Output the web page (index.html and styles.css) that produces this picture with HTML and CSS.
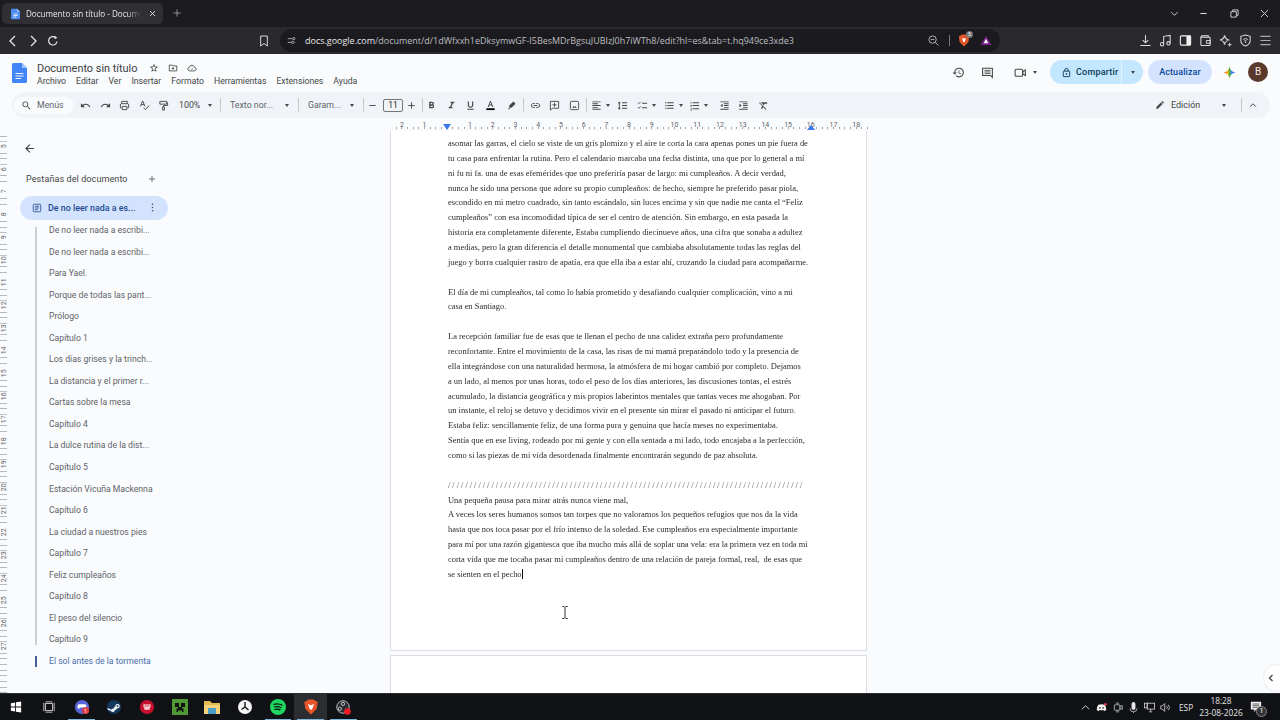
FILE: index.html
```html
<!DOCTYPE html>
<html lang="es">
<head>
  <meta charset="utf-8">
  <title>Documento sin título - Documentos de Google</title>
  <link rel="stylesheet" href="styles.css">
</head>
<body>
  <!-- browser tabs -->
  <div class="tabstrip">
    <div class="tab">
      <svg class="tab-icon" viewBox="0 0 12 14"><path d="M1 0h7l4 4v9a1 1 0 0 1-1 1H1a1 1 0 0 1-1-1V1a1 1 0 0 1 1-1z" fill="#4c8df6"/><path d="M8 0l4 4H8z" fill="#a6c8fb"/><path d="M3 7h6M3 9h6M3 11h4" stroke="#fff" stroke-width="1"/></svg>
      <span class="tab-title">Documento sin título - Documen</span>
      <svg class="tab-close" viewBox="0 0 10 10"><path d="M1.5 1.5l7 7M8.5 1.5l-7 7" stroke="#e6e6e6" stroke-width="1.3"/></svg>
    </div>
    <svg class="tab-new" viewBox="0 0 10 10"><path d="M5 .5v9M.5 5h9" stroke="#a9a9ad" stroke-width="1"/></svg>
    <div class="win-controls">
      <svg viewBox="0 0 10 10"><path d="M1.5 3.5L5 7l3.5-3.5" fill="none" stroke="#ddd" stroke-width="1"/></svg>
      <svg viewBox="0 0 10 10"><path d="M1.5 5h7" stroke="#ddd" stroke-width="1.2"/></svg>
      <svg viewBox="0 0 10 10"><path d="M1 3h6v6H1zM3 3V1h6v6H7" fill="none" stroke="#ddd" stroke-width="1"/></svg>
      <svg viewBox="0 0 10 10"><path d="M1 1l8 8M9 1l-8 8" stroke="#ddd" stroke-width="1"/></svg>
    </div>
  </div>

  <!-- address bar -->
  <div class="addressbar">
    <svg class="nav-btn" viewBox="0 0 12 12"><path d="M8 1L3 6l5 5" fill="none" stroke="#e8e8e8" stroke-width="1.3"/></svg>
    <svg class="nav-btn" viewBox="0 0 12 12"><path d="M4 1l5 5-5 5" fill="none" stroke="#e8e8e8" stroke-width="1.3"/></svg>
    <svg class="nav-btn" viewBox="0 0 12 12"><path d="M10 6.5A4.2 4.2 0 1 1 8.6 2.6" fill="none" stroke="#e8e8e8" stroke-width="1.2"/><path d="M7.3 0.6l3 2.1-2.6 1.6z" fill="#e8e8e8"/></svg>
    <svg class="bookmark" viewBox="0 0 12 14"><path d="M2 1h8v12L6 10l-4 3z" fill="none" stroke="#d8d8d8" stroke-width="1.2"/></svg>
    <div class="omnibox">
      <svg class="site-info" viewBox="0 0 12 12"><path d="M1 3.5h6M10 8.5h1M1 8.5h5" stroke="#cfcfcf" stroke-width="1"/><circle cx="9" cy="3.5" r="1.5" fill="none" stroke="#cfcfcf"/><circle cx="7.5" cy="8.5" r="1.5" fill="none" stroke="#cfcfcf"/></svg>
      <span class="url"><b>docs.google.com</b>/document/d/1dWfxxh1eDksymwGF-I5BesMDrBgsuJUBIzJ0h7iWTh8/edit?hl=es&amp;tab=t.hq949ce3xde3</span>
      <svg class="omni-zoom" viewBox="0 0 12 12"><circle cx="5" cy="5" r="4" fill="none" stroke="#bdbdbd"/><path d="M8 8l3.4 3.4M3 5h4" stroke="#bdbdbd"/></svg>
      <span class="omni-sep"></span>
      <span class="brave-badge">
        <svg viewBox="0 0 12 14"><path d="M2 1.500L4 .5h4l2 1 1.500 1-.7 6L6 13.500 1.200 8.500.5 2.500z" fill="#e2562b"/><path d="M4 4l2 1 2-1-1 4-1 1-1-1z" fill="#fff"/></svg>
        <i>5</i>
      </span>
      <svg class="omni-ext" viewBox="0 0 12 12"><path d="M6 1l6 10H0z" fill="#7a1d8c"/><path d="M6 4l2.600 5H3.400z" fill="#f4f4f4"/></svg>
    </div>
    <div class="browser-actions">
      <svg viewBox="0 0 14 14"><path d="M7 1v8M4 6.500L7 9.500l3-3M1.500 12.500h11" fill="none" stroke="#ddd" stroke-width="1.100"/></svg>
      <svg viewBox="0 0 14 14"><path d="M5 11V2.500l7-1V10" fill="none" stroke="#ddd" stroke-width="1.100"/><circle cx="3.300" cy="11" r="1.800" fill="none" stroke="#ddd" stroke-width="1.100"/><circle cx="10.200" cy="10" r="1.800" fill="none" stroke="#ddd" stroke-width="1.100"/></svg>
      <svg viewBox="0 0 14 14"><rect x="1.500" y="2" width="11" height="10" rx="1" fill="none" stroke="#eee" stroke-width="1.200"/><rect x="8" y="2" width="4.500" height="10" fill="#eee"/></svg>
      <svg viewBox="0 0 14 14"><path d="M2 3.500h9a1 1 0 0 1 1 1v7a1 1 0 0 1-1 1H3a1 1 0 0 1-1-1zM2 3.500l1-1.500h7v1.500" fill="none" stroke="#ddd" stroke-width="1.100"/><path d="M8 7h4v3H8z" fill="none" stroke="#ddd"/></svg>
      <svg viewBox="0 0 14 14"><path d="M6 1.500c.5 3 2 4.500 5 5-3 .5-4.500 2-5 5-.5-3-2-4.500-5-5 3-.5 4.500-2 5-5z" fill="none" stroke="#ddd" stroke-width="1.100"/><path d="M11.500 9.500v4M9.500 11.500h4" stroke="#ddd"/></svg>
      <svg viewBox="0 0 14 14"><path d="M7 1l5 1.500V7c0 3-2.500 5-5 6-2.500-1-5-3-5-6V2.500z" fill="none" stroke="#ddd" stroke-width="1.100"/><path d="M4.500 6a3.500 3.500 0 0 1 5 0M5.800 7.500a1.700 1.700 0 0 1 2.400 0" fill="none" stroke="#ddd"/><circle cx="7" cy="9" r=".8" fill="#ddd"/></svg>
      <svg viewBox="0 0 14 14"><path d="M1.500 2.500h11M1.500 7h11M1.500 11.500h11" stroke="#aaa" stroke-width="1.300"/></svg>
    </div>
  </div>

  <!-- docs title + menus -->
  <header class="docs-header">
    <svg class="docs-logo" viewBox="0 0 15 20"><path d="M1.500 0H10l5 5v13.500a1.500 1.500 0 0 1-1.500 1.500h-12A1.500 1.500 0 0 1 0 18.500v-17A1.500 1.500 0 0 1 1.500 0z" fill="#4285f4"/><path d="M10 0l5 5h-5z" fill="#a1c2fa"/><path d="M3.500 10.500h8M3.500 13h8M3.500 15.500h5.500" stroke="#f1f5fe" stroke-width="1.100"/></svg>
    <div class="docs-titles">
      <div class="title-row">
        <span class="doc-title">Documento sin título</span>
        <svg class="title-icon" viewBox="0 0 24 24"><path d="M22 9.240l-7.190-.62L12 2 9.190 8.630 2 9.240l5.460 4.730L5.820 21 12 17.270 18.180 21l-1.630-7.030L22 9.240zM12 15.400l-3.760 2.270 1-4.280-3.320-2.880 4.380-.38L12 6.100l1.710 4.040 4.380.38-3.320 2.880 1 4.280L12 15.400z"/></svg>
        <svg class="title-icon" viewBox="0 0 24 24"><path d="M3 5h7l2 2h9v12H3z" fill="none" stroke="#444746" stroke-width="2"/><path d="M12 10v6M9 13h6" stroke="#444746" stroke-width="2"/></svg>
        <svg class="title-icon" viewBox="0 0 24 24"><path d="M6.500 19a4.500 4.500 0 0 1-.6-8.960A6.500 6.500 0 0 1 18.300 10.100 4.500 4.500 0 0 1 17.500 19z" fill="none" stroke="#444746" stroke-width="2"/><path d="M9 13.500l2.200 2.200 4-4" fill="none" stroke="#444746" stroke-width="1.500"/></svg>
      </div>
      <nav class="menu-row">
        <span>Archivo</span><span>Editar</span><span>Ver</span><span>Insertar</span><span>Formato</span><span>Herramientas</span><span>Extensiones</span><span>Ayuda</span>
      </nav>
    </div>
    <div class="header-actions">
      <svg class="head-icon" viewBox="0 0 24 24"><path d="M13 3a9 9 0 0 0-9 9H1l3.890 3.890.07.14L9 12H6c0-3.870 3.130-7 7-7s7 3.130 7 7-3.130 7-7 7c-1.930 0-3.680-.79-4.940-2.060l-1.420 1.420A8.954 8.954 0 0 0 13 21a9 9 0 0 0 0-18zm-1 5v5l4.280 2.540.72-1.210-3.500-2.080V8H12z"/></svg>
      <svg class="head-icon comments" viewBox="0 0 24 24"><path d="M3 4h18v17l-3.500-3.500H3z" fill="none" stroke="#444746" stroke-width="2"/><path d="M6.500 8h11M6.500 11h11M6.500 14h11" stroke="#444746" stroke-width="1.600"/></svg>
      <svg class="head-icon meet" viewBox="0 0 24 24"><rect x="2" y="6" width="14" height="13" rx="2.500" fill="none" stroke="#444746" stroke-width="2"/><path d="M16 10.500l5-3v10l-5-3z" fill="none" stroke="#444746" stroke-width="2"/></svg>
      <span class="caret meet-caret"></span>
      <div class="share">
        <div class="share-main">
          <svg viewBox="0 0 24 24"><rect x="5" y="9" width="14" height="12" rx="1.500" fill="none" stroke="#0b3a55" stroke-width="2"/><path d="M8.500 9V6.500a3.500 3.500 0 0 1 7 0V9" fill="none" stroke="#0b3a55" stroke-width="2"/><circle cx="12" cy="15" r="1.700" fill="#0b3a55"/></svg>
          <span>Compartir</span>
        </div>
        <div class="share-more"><span class="caret"></span></div>
      </div>
      <div class="upgrade">Actualizar</div>
      <svg class="gemini" viewBox="0 0 24 24">
        <defs><linearGradient id="gem" x1="0" y1="0" x2="1" y2="0"><stop offset="0" stop-color="#ea4335"/><stop offset=".38" stop-color="#fbbc04"/><stop offset=".52" stop-color="#34a853"/><stop offset=".68" stop-color="#4285f4"/><stop offset="1" stop-color="#3b78e7"/></linearGradient></defs>
        <path d="M12 0c.6 6.800 4.400 11 12 12-7.600 1-11.400 5.200-12 12-.6-6.800-4.400-11-12-12 7.600-1 11.400-5.200 12-12z" fill="url(#gem)"/>
      </svg>
      <div class="avatar">B</div>
    </div>
  </header>

  <!-- formatting toolbar -->
  <div class="toolbar">
    <div class="tb-search">
      <svg viewBox="0 0 24 24"><path d="M15.500 14h-.79l-.28-.27C15.410 12.590 16 11.110 16 9.500 16 5.910 13.090 3 9.500 3S3 5.910 3 9.500 5.910 16 9.500 16c1.610 0 3.090-.59 4.230-1.570l.27.28v.79l5 4.990L20.490 19l-4.990-5zm-6 0C7.010 14 5 11.990 5 9.500S7.010 5 9.500 5 14 7.010 14 9.500 11.990 14 9.500 14z"/></svg>
      <span>Menús</span>
    </div>
    <span class="tb"><svg viewBox="0 0 24 24"><path d="M12.500 8c-2.650 0-5.050.99-6.900 2.600L2 7v9h9l-3.620-3.620c1.390-1.160 3.160-1.880 5.120-1.880 3.540 0 6.550 2.310 7.600 5.500l2.370-.78C21.080 11.030 17.150 8 12.500 8z"/></svg></span>
    <span class="tb"><svg viewBox="0 0 24 24"><path d="M18.400 10.600C16.550 8.990 14.150 8 11.500 8c-4.650 0-8.580 3.030-9.960 7.220L3.900 16c1.050-3.190 4.050-5.500 7.600-5.500 1.950 0 3.730.72 5.120 1.880L13 16h9V7l-3.600 3.600z"/></svg></span>
    <span class="tb"><svg viewBox="0 0 24 24"><path d="M6 8V3h12v5M6 17H3v-6.500A2.500 2.500 0 0 1 5.500 8h13a2.500 2.500 0 0 1 2.500 2.500V17h-3M7 14h10v7H7z" fill="none" stroke="#444746" stroke-width="2"/></svg></span>
    <span class="tb"><svg viewBox="0 0 24 24"><path d="M3 14L8 2l5 12M5 10h6M10 17l4 4 8-9" fill="none" stroke="#444746" stroke-width="2"/></svg></span>
    <span class="tb"><svg viewBox="0 0 24 24"><path d="M4 3h15v6H4zM19 6h2v6h-9v3M10 15h4v7h-4z" fill="none" stroke="#444746" stroke-width="2"/></svg></span>
    <span class="tb-label zoom-label">100%</span><span class="caret"></span>
    <span class="tb-sep sep-a"></span>
    <span class="tb-label style-label">Texto nor...</span><span class="caret caret-style"></span>
    <span class="tb-sep sep-b"></span>
    <span class="tb-label font-label">Garam...</span><span class="caret caret-font"></span>
    <span class="tb-sep sep-c"></span>
    <span class="tb size-btn"><svg viewBox="0 0 24 24"><path d="M5 12h14" stroke="#444746" stroke-width="2"/></svg></span>
    <span class="size-box">11</span>
    <span class="tb size-btn"><svg viewBox="0 0 24 24"><path d="M5 12h14M12 5v14" stroke="#444746" stroke-width="2"/></svg></span>
    <span class="tb-sep sep-d"></span>
    <span class="tb"><svg viewBox="0 0 24 24"><path d="M15.600 10.790c.97-.67 1.650-1.770 1.650-2.790 0-2.260-1.750-4-4-4H7v14h7.040c2.090 0 3.710-1.700 3.710-3.790 0-1.520-.86-2.820-2.150-3.420zM10 6.500h3c.83 0 1.500.67 1.500 1.500s-.67 1.500-1.500 1.500h-3v-3zm3.500 9H10v-3h3.500c.83 0 1.500.67 1.500 1.500s-.67 1.500-1.500 1.500z"/></svg></span>
    <span class="tb"><svg viewBox="0 0 24 24"><path d="M10 4v3h2.210l-3.420 8H6v3h8v-3h-2.210l3.420-8H18V4z"/></svg></span>
    <span class="tb"><svg viewBox="0 0 24 24"><path d="M12 17c3.310 0 6-2.690 6-6V3h-2.500v8c0 1.930-1.570 3.500-3.500 3.500S8.500 12.930 8.500 11V3H6v8c0 3.310 2.690 6 6 6zm-7 2v2h14v-2H5z"/></svg></span>
    <span class="tb"><svg viewBox="0 0 24 24"><path d="M11 2L6 15h2.300l1.100-3h5.200l1.100 3H18L13 2zm-.9 8L12 4.700 13.900 10z"/><path d="M3 18h18v4H3z" fill="#000"/></svg></span>
    <span class="tb highlight"><svg viewBox="0 0 24 24"><path d="M16 3l5 5-9 9H7v-5zM7 17l-3 3h5z"/></svg></span>
    <span class="tb-sep sep-e"></span>
    <span class="tb"><svg viewBox="0 0 24 24"><path d="M3.900 12c0-1.710 1.390-3.100 3.100-3.100h4V7H7c-2.760 0-5 2.240-5 5s2.240 5 5 5h4v-1.900H7c-1.710 0-3.100-1.390-3.100-3.100zM8 13h8v-2H8v2zm9-6h-4v1.900h4c1.710 0 3.100 1.390 3.100 3.100s-1.390 3.100-3.100 3.100h-4V17h4c2.760 0 5-2.240 5-5s-2.240-5-5-5z"/></svg></span>
    <span class="tb"><svg viewBox="0 0 24 24"><path d="M3 3h18v15H8l-5 4z" fill="none" stroke="#444746" stroke-width="2"/><path d="M12 6v9M7.500 10.500h9" stroke="#444746" stroke-width="2"/></svg></span>
    <span class="tb"><svg viewBox="0 0 24 24"><rect x="3" y="3" width="18" height="18" rx="2" fill="none" stroke="#444746" stroke-width="2"/><path d="M7 17l3-4 2 2.500 2-2.500 3 4z"/></svg></span>
    <span class="tb-sep sep-f"></span>
    <span class="tb tb-tight"><svg viewBox="0 0 24 24"><path d="M15 15H3v2h12v-2zm0-8H3v2h12V7zM3 13h18v-2H3v2zm0 8h18v-2H3v2zM3 3v2h18V3H3z"/></svg></span><span class="caret caret-near"></span>
    <span class="tb spacing"><svg viewBox="0 0 24 24"><path d="M5 3l3.500 4h-7zM5 21l3.500-4h-7zM4 7h2v10H4zM11 5h11v2H11zM11 11h11v2H11zM11 17h11v2H11z"/></svg></span>
    <span class="tb tb-tight checklist"><svg viewBox="0 0 24 24"><path d="M2 6l2 2 4-4M2 16l2 2 4-4" fill="none" stroke="#444746" stroke-width="2"/><path d="M11 6h11v2H11zM11 16h11v2H11z"/></svg></span><span class="caret caret-near"></span>
    <span class="tb tb-tight bullets"><svg viewBox="0 0 24 24"><path d="M4 10.500c-.83 0-1.500.67-1.500 1.500s.67 1.500 1.500 1.500 1.500-.67 1.500-1.500-.67-1.500-1.500-1.500zm0-6c-.83 0-1.500.67-1.500 1.500S3.170 7.500 4 7.500 5.500 6.830 5.500 6 4.830 4.500 4 4.500zm0 12c-.83 0-1.500.68-1.500 1.500s.68 1.500 1.500 1.500 1.500-.68 1.500-1.500-.67-1.500-1.500-1.500zM7 19h14v-2H7v2zm0-6h14v-2H7v2zm0-8v2h14V5H7z"/></svg></span><span class="caret caret-near"></span>
    <span class="tb tb-tight numbers"><svg viewBox="0 0 24 24"><path d="M3 4h2v5H4V5H3zM3 11h3v1H4.500L6 13.500V15H3v-1h2l-2-2zM3 18h3v5H3v-1h2v-1H4v-1h1v-1H3zM8 5h14v2H8zM8 11h14v2H8zM8 18h14v2H8z"/></svg></span><span class="caret caret-near"></span>
    <span class="tb indent"><svg viewBox="0 0 24 24"><path d="M3 3h18v2H3zM11 7h10v2H11zM11 11h10v2H11zM11 15h10v2H11zM3 19h18v2H3zM8 8v8l-5-4z"/></svg></span>
    <span class="tb"><svg viewBox="0 0 24 24"><path d="M3 3h18v2H3zM11 7h10v2H11zM11 11h10v2H11zM11 15h10v2H11zM3 19h18v2H3zM3 8v8l5-4z"/></svg></span>
    <span class="tb"><svg viewBox="0 0 24 24"><path d="M3.270 5L2 6.270l6.970 6.970L6.500 19h3l1.570-3.660L16.730 21 18 19.730 3.550 5.270 3.270 5zM6 5v.18L8.820 8h2.400l-.72 1.680 2.100 2.100L14.210 8H20V5H6z"/></svg></span>
    <div class="tb-right">
      <svg class="edit-icon" viewBox="0 0 24 24"><path d="M3 17.250V21h3.750L17.810 9.940l-3.750-3.750L3 17.250zM20.710 7.040a.996.996 0 0 0 0-1.410l-2.340-2.340a.996.996 0 0 0-1.410 0l-1.830 1.830 3.750 3.750 1.830-1.830z"/></svg>
      <span class="edit-label">Edición</span>
      <span class="caret edit-caret"></span>
      <span class="tb-sep edit-sep"></span>
      <svg class="collapse" viewBox="0 0 12 12"><path d="M2.500 8L6 4.500 9.500 8" fill="none" stroke="#444746" stroke-width="1.200"/></svg>
    </div>
  </div>

  <!-- horizontal ruler -->
  <div class="ruler-bar">
    <div class="ruler-h">
      <span>2</span><span>1</span><span class="ruler-mark"><i></i></span><span>1</span><span>2</span><span>3</span><span>4</span><span>5</span><span>6</span><span>7</span><span>8</span><span>9</span><span>10</span><span>11</span><span>12</span><span>13</span><span>14</span><span>15</span><span class="ruler-mark-r">16</span><span>17</span><span>18</span>
    </div>
  </div>

  <div class="workspace">
    <div class="ruler-v">
      <span>5</span><span>6</span><span>7</span><span>8</span><span>9</span><span>10</span><span>11</span><span>12</span><span>13</span><span>14</span><span>15</span><span>16</span><span>17</span><span>18</span><span>19</span><span>20</span><span>21</span><span>22</span><span>23</span><span>24</span><span>25</span><span>26</span><span>27</span>
    </div>

    <aside class="sidebar">
      <svg class="back" viewBox="0 0 24 24"><path d="M20 11H7.830l5.590-5.590L12 4l-8 8 8 8 1.410-1.410L7.830 13H20v-2z"/></svg>
      <div class="side-head">
        <span>Pestañas del documento</span>
        <svg viewBox="0 0 12 12"><path d="M6 1.500v9M1.500 6h9" stroke="#444746" stroke-width="1.100"/></svg>
      </div>
      <div class="side-active">
        <svg class="doc-tab-icon" viewBox="0 0 24 24"><rect x="3" y="3" width="18" height="18" rx="2.500" fill="none" stroke="#1f4a8f" stroke-width="2"/><path d="M7 8h10M7 12h10M7 16h7" stroke="#1f4a8f" stroke-width="2"/></svg>
        <span class="side-active-text">De no leer nada a es...</span>
        <svg class="kebab" viewBox="0 0 4 14"><circle cx="2" cy="2" r="1.200"/><circle cx="2" cy="7" r="1.200"/><circle cx="2" cy="12" r="1.200"/></svg>
      </div>
      <ul class="outline">
        <li>De no leer nada a escribi...</li>
        <li>De no leer nada a escribi...</li>
        <li>Para Yael.</li>
        <li>Porque de todas las pant...</li>
        <li>Prólogo</li>
        <li>Capítulo 1</li>
        <li>Los días grises y la trinch...</li>
        <li>La distancia y el primer r...</li>
        <li>Cartas sobre la mesa</li>
        <li>Capítulo 4</li>
        <li>La dulce rutina de la dist...</li>
        <li>Capítulo 5</li>
        <li>Estación Vicuña Mackenna</li>
        <li>Capítulo 6</li>
        <li>La ciudad a nuestros pies</li>
        <li>Capítulo 7</li>
        <li>Feliz cumpleaños</li>
        <li>Capítulo 8</li>
        <li>El peso del silencio</li>
        <li>Capítulo 9</li>
        <li class="current">El sol antes de la tormenta</li>
      </ul>
    </aside>

    <main class="doc-area">
      <div class="page">
        <div class="page-text">
          <p>asomar las garras, el cielo se viste de un gris plomizo y el aire te corta la cara apenas pones un pie fuera de</p>
          <p>tu casa para enfrentar la rutina. Pero el calendario marcaba una fecha distinta, una que por lo general a mí</p>
          <p>ni fu ni fa. una de esas efemérides que uno preferiría pasar de largo: mi cumpleaños. A decir verdad,</p>
          <p>nunca he sido una persona que adore su propio cumpleaños: de hecho, siempre he preferido pasar piola,</p>
          <p>escondido en mi metro cuadrado, sin tanto escándalo, sin luces encima y sin que nadie me canta el “Feliz</p>
          <p>cumpleaños” con esa incomodidad típica de ser el centro de atención. Sin embargo, en esta pasada la</p>
          <p>historia era completamente diferente, Estaba cumpliendo diecinueve años, una cifra que sonaba a adultez</p>
          <p>a medias, pero la gran diferencia el detalle monumental que cambiaba absolutamente todas las reglas del</p>
          <p>juego y borra cualquier rastro de apatía, era que ella iba a estar ahí, cruzando la ciudad para acompañarme.</p>
          <p class="blank"></p>
          <p>El día de mi cumpleaños, tal como lo había prometido y desafiando cualquier complicación, vino a mi</p>
          <p>casa en Santiago.</p>
          <p class="blank"></p>
          <p>La recepción familiar fue de esas que te llenan el pecho de una calidez extraña pero profundamente</p>
          <p>reconfortante. Entre el movimiento de la casa, las risas de mi mamá preparándolo todo y la presencia de</p>
          <p>ella integrándose con una naturalidad hermosa, la atmósfera de mi hogar cambió por completo. Dejamos</p>
          <p>a un lado, al menos por unas horas, todo el peso de los días anteriores, las discusiones tontas, el estrés</p>
          <p>acumulado, la distancia geográfica y mis propios laberintos mentales que tantas veces me ahogaban. Por</p>
          <p>un instante, el reloj se detuvo y decidimos vivir en el presente sin mirar el pasado ni anticipar el futuro.</p>
          <p>Estaba feliz: sencillamente feliz, de una forma pura y genuina que hacía meses no experimentaba.</p>
          <p>Sentía que en ese living, rodeado por mi gente y con ella sentada a mi lado, todo encajaba a la perfección,</p>
          <p>como si las piezas de mi vida desordenada finalmente encontrarán segundo de paz absoluta.</p>
          <p class="blank"></p>
          <p class="slashes">//////////////////////////////////////////////////////////////////////////////////</p>
          <p>Una pequeña pausa para mirar atrás nunca viene mal,</p>
          <p>A veces los seres humanos somos tan torpes que no valoramos los pequeños refugios que nos da la vida</p>
          <p>hasta que nos toca pasar por el frío intenso de la soledad. Ese cumpleaños era especialmente importante</p>
          <p>para mí por una razón gigantesca que iba mucho más allá de soplar una vela: era la primera vez en toda mi</p>
          <p>corta vida que me tocaba pasar mi cumpleaños dentro de una relación de pareja formal, real,&nbsp; de esas que</p>
          <p>se sienten en el pecho<span class="text-caret"></span></p>
        </div>
      </div>
      <div class="page page-next"></div>
    </main>

    <!-- mouse cursor and side panel handle, both float over the page -->
    <svg class="ibeam" viewBox="0 0 8 14"><path d="M1 .5h2l1 1 1-1h2M4 1.500v11M1 13.500h2l1-1 1 1h2" fill="none" stroke="#222" stroke-width="1"/></svg>
    <div class="side-handle"><svg viewBox="0 0 10 10"><path d="M6.500 2L3.500 5l3 3" fill="none" stroke="#444746" stroke-width="1.300"/></svg></div>
  </div>

  <!-- windows taskbar -->
  <footer class="taskbar">
    <div class="task-slot"><svg viewBox="0 0 14 14"><path d="M1 2.500l5-.8V6.500H1zM7 1.500l6-1v6H7zM1 7.500h5v4.800l-5-.8zM7 7.500h6v6l-6-1z" fill="#fff"/></svg></div>
    <div class="task-slot"><svg viewBox="0 0 14 14"><rect x="3" y="3" width="8" height="8" fill="none" stroke="#ddd"/><path d="M1 2v10M13 2v10M3 1h8M3 13h8" stroke="#ddd"/></svg></div>
    <div class="task-slot running wide"><svg viewBox="0 0 18 18"><circle cx="9" cy="9" r="8" fill="#5865d8"/><path d="M4 8a2 2 0 0 1 2-2h6a2 2 0 0 1 2 2v2l-1.500 1-2-1.500H7.500l-2 1.500L4 10z" fill="#fff"/><circle cx="13" cy="13" r="4" fill="#e0393e"/><text x="13" y="15.200" class="badge-num">1</text></svg></div>
    <div class="task-slot"><svg viewBox="0 0 18 18"><circle cx="9" cy="9" r="8" fill="#14375c"/><path d="M1.500 10l4.500 1.800a2.500 2.500 0 0 1 2-.8l2.500-3a2.500 2.500 0 1 1 2.500 2.500L10 13a2.500 2.500 0 0 1-4.600.2L2 12z" fill="#eef3f7"/><circle cx="13" cy="8" r="1.100" fill="#14375c"/></svg></div>
    <div class="task-slot"><svg viewBox="0 0 18 18"><circle cx="9" cy="9" r="8" fill="#c8102e"/><path d="M5 6h8v3l-1 1v2H6V9.500L5 9z" fill="#f6d4d8"/><path d="M7 6v3M9 6v3M11 6v3" stroke="#c8102e" stroke-width=".7"/></svg></div>
    <div class="task-slot"><svg viewBox="0 0 16 16"><rect width="16" height="16" fill="#4f9a35"/><path d="M3 4h4v4H3zM9 4h4v4H9zM6 8h4v1.500h1.500V13H10v-1.500H6V13H4.500V9.500H6z" fill="#111"/></svg></div>
    <div class="task-slot"><svg viewBox="0 0 16 14"><path d="M0 1h6l2 2h8v11H0z" fill="#e4b94e"/><rect x="0" y="5" width="16" height="9" fill="#f3d27a"/><rect x="4" y="8" width="8" height="6" fill="#4b9fc4"/></svg></div>
    <div class="task-slot"><svg viewBox="0 0 16 16"><circle cx="8" cy="8" r="7" fill="#f4f4f4"/><path d="M8 3v5l3.500 3M8 8L4.500 10.500" fill="none" stroke="#111" stroke-width="1.400"/></svg></div>
    <div class="task-slot running"><svg viewBox="0 0 16 16"><circle cx="8" cy="8" r="8" fill="#1ed760"/><path d="M3.500 5.500c3-.9 6.200-.6 9 .9M4 8c2.500-.7 5.200-.4 7.500.9M4.500 10.500c2-.5 4.200-.3 6 .8" fill="none" stroke="#111" stroke-width="1.200"/></svg></div>
    <div class="task-slot running active"><svg viewBox="0 0 16 18"><path d="M3 2l2.500-1.500h5L13 2l2.500 1.500-1 7.500L8 17.500 1.500 11l-1-7.500z" fill="#e8552a"/><path d="M4.500 5.500L8 7l3.500-1.500L9.500 11 8 12.500 6.500 11z" fill="#fff"/></svg></div>
    <div class="task-slot running"><svg viewBox="-1 -1 18 18"><circle cx="8" cy="8" r="7" fill="#2a2c33" stroke="#cfcfcf"/><circle cx="8" cy="4.500" r="1.800" fill="none" stroke="#cfcfcf"/><circle cx="4.500" cy="10" r="1.800" fill="none" stroke="#cfcfcf"/><circle cx="13" cy="13" r="3.700" fill="#ee1c25"/></svg></div>

    <div class="tray">
      <svg class="tray-icon" viewBox="0 0 12 12"><path d="M2 8l4-4 4 4" fill="none" stroke="#ddd"/></svg>
      <svg class="tray-icon" viewBox="0 0 14 12"><path d="M3 2.500c2.500-1 5.500-1 8 0 1.500 2 2 4.500 2 7l-2.500 1L10 9.500H4l-.5 1L1 9.500c0-2.500.5-5 2-7z" fill="#f2f2f2"/><circle cx="5" cy="6.500" r="1" fill="#222"/><circle cx="9" cy="6.500" r="1" fill="#222"/><circle cx="12" cy="2" r="1.700" fill="#e0455c"/></svg>
      <svg class="tray-icon" viewBox="0 0 14 14"><rect x="3" y="3.500" width="7" height="7" rx="1" fill="none" stroke="#ccc"/><path d="M10 6l3-1.500v5L10 8M5 1.500h4M5 12.500h4" fill="none" stroke="#ccc"/></svg>
      <svg class="tray-icon" viewBox="0 0 14 14"><rect x="4.500" y="0" width="5" height="10" rx="2.500" fill="#e4e4e4"/><path d="M2.500 8a4.500 4.500 0 0 0 9 0M7 12.500v1.500" fill="none" stroke="#ccc"/></svg>
      <svg class="tray-icon" viewBox="0 0 14 14"><rect x="4" y="1.500" width="9.500" height="7.500" fill="none" stroke="#ddd"/><rect x=".5" y="1.500" width="3.500" height="6" fill="none" stroke="#ddd"/><path d="M8.500 9v3M6.500 12.500h4" stroke="#ddd"/></svg>
      <svg class="tray-icon" viewBox="0 0 14 14"><path d="M1 5h2l3-3v10L3 9H1z" fill="none" stroke="#ddd"/><path d="M8.500 5a3 3 0 0 1 0 4M10.500 3.500a5 5 0 0 1 0 7" fill="none" stroke="#ddd"/></svg>
      <span class="lang">ESP</span>
      <div class="clock"><span>18:28</span><span>23-08-2026</span></div>
      <div class="notif">
        <svg viewBox="0 0 14 14"><path d="M1 1h12v9H7l-2 3v-3H1z" fill="#f0f0f0"/><path d="M3 3.500h8M3 5.500h8M3 7.500h6" stroke="#222" stroke-width=".8"/></svg>
        <span class="notif-count">1</span>
      </div>
    </div>
  </footer>
</body>
</html>
```

FILE: styles.css
```css
* { box-sizing: border-box; }
html, body { margin: 0; height: 100%; }
body {
  width: 1280px;
  height: 720px;
  overflow: hidden;
  display: flex;
  flex-direction: column;
  font-family: Roboto, "Noto Sans", sans-serif;
  background: #f9fbfd;
  color: #444746;
}
svg { display: block; flex: none; }
.caret { width: 0; height: 0; border-left: 2.500px solid transparent; border-right: 2.500px solid transparent; border-top: 3px solid #444746; flex: none; margin: 0 0 0 7px; }

/* browser chrome */
.tabstrip { height: 27px; background: #1c1c20; display: flex; align-items: flex-start; padding: 3px 0 0 2px; flex: none; }
.tab { width: 161px; height: 21px; background: #303034; border-radius: 5px; display: flex; align-items: center; padding-left: 9px; }
.tab-icon { width: 9px; height: 12px; }
.tab-title { width: 115px; margin-left: 6px; font: 8.100px "Open Sans", sans-serif; color: #e8e8e8; white-space: nowrap; overflow: hidden; -webkit-mask-image: linear-gradient(90deg, #000 88%, transparent); mask-image: linear-gradient(90deg, #000 88%, transparent); }
.tab-close { width: 7px; height: 7px; margin-left: 8px; }
.tab-new { width: 8px; height: 8px; margin: 6px 0 0 10px; }
.win-controls { margin-left: auto; display: flex; align-items: center; height: 21px; }
.win-controls svg { width: 9px; height: 9px; margin-right: 21px; }
.win-controls svg:first-child { margin-right: 20px; }
.win-controls svg:nth-child(3) { margin-left: 1px; margin-right: 21px; }
.win-controls svg:last-child { margin-right: 11px; }

.addressbar { height: 27px; background: #2a2a2e; display: flex; align-items: center; flex: none; }
.nav-btn { width: 12px; height: 12px; margin-left: 8px; }
.nav-btn:first-child { margin-left: 7px; }
.bookmark { width: 10px; height: 12px; margin-left: 200px; }
.omnibox { width: 720px; height: 23px; margin-left: 11px; background: #1b1b1f; border-radius: 12px; display: flex; align-items: center; padding-left: 7px; }
.site-info { width: 9px; height: 9px; }
.url { margin-left: 9px; font: 8.970px "Open Sans", sans-serif; color: #bdbdc0; white-space: nowrap; }
.url b { font-weight: 400; color: #e8e8e8; }
.omni-zoom { width: 11px; height: 11px; margin-left: auto; }
.omni-sep { width: 1px; height: 11px; background: #777; margin-left: 10px; }
.brave-badge { position: relative; margin-left: 8px; }
.brave-badge svg { width: 12px; height: 13px; }
.brave-badge i { position: absolute; top: -3px; left: 8px; width: 7px; height: 7px; border-radius: 50%; background: #777; font: 5px/7px Roboto, sans-serif; color: #fff; text-align: center; }
.omni-ext { width: 12px; height: 11px; margin: 0 8px 0 10px; }
.browser-actions { display: flex; align-items: center; margin-left: 139px; }
.browser-actions svg { width: 13px; height: 13px; margin-right: 7px; }

/* docs header */
.docs-header { height: 38px; display: flex; flex: none; align-items: flex-start; position: relative; }
.docs-logo { width: 15px; height: 20px; margin: 9px 0 0 12px; }
.docs-titles { margin-left: 10px; }
.title-row { display: flex; align-items: center; height: 14px; margin-top: 7px; }
.doc-title { font-size: 10.900px; color: #3c4043; width: 100px; white-space: nowrap; }
.title-icon { width: 10px; height: 10px; fill: #444746; margin-left: 9px; }
.title-icon:nth-child(2) { margin-left: 12px; }
.menu-row { display: flex; gap: 10px; font-size: 8.700px; color: #444746; margin-top: 1px; white-space: nowrap; }
.header-actions { position: absolute; right: 0; top: 0; height: 36px; display: flex; align-items: center; }
.head-icon { width: 13px; height: 13px; fill: #444746; margin-right: 16px; }
.head-icon.comments { margin-right: 20px; }
.head-icon.meet { margin: 0 6px 0 0; }
.meet-caret { margin: 0 13.500px 0 0; }
.share { display: flex; height: 24px; width: 93px; background: #c2e7ff; border-radius: 12px; color: #0b3a55; overflow: hidden; }
.share-main { width: 72px; display: flex; align-items: center; padding-left: 11px; font-size: 9px; font-weight: 500; letter-spacing: .2px; border-right: 1px solid #e4f3fd; }
.share-main svg { width: 11px; height: 11px; margin-right: 4px; }
.share-more { flex: 1; display: flex; align-items: center; justify-content: center; }
.share-more .caret { margin: 0; }
.upgrade { width: 64px; height: 24px; margin-left: 5px; border-radius: 12px; background: #d3e3fd; color: #0b4a9e; font-size: 9px; font-weight: 500; line-height: 24px; text-align: center; letter-spacing: .1px; }
.gemini { width: 13px; height: 13px; margin-left: 10.500px; }
.avatar { width: 20px; height: 20px; border-radius: 50%; background: #5b382c; color: #f4ece8; font-size: 10px; line-height: 20px; text-align: center; margin: 0 12px 0 12.500px; }

/* formatting toolbar */
.toolbar { height: 26px; margin: 0 10px 0 12px; background: #f0f4f9; border-radius: 13px; display: flex; align-items: center; flex: none; }
.tb-search { width: 60px; height: 17px; margin-left: 2px; background: #f9fbfd; border-radius: 9px; display: flex; align-items: center; padding-left: 7px; font-size: 8.800px; color: #5f6368; }
.tb-search svg { width: 11px; height: 11px; margin-right: 5px; fill: #444746; }
.tb { width: 19.500px; display: flex; justify-content: center; flex: none; }
.tb svg { width: 11px; height: 11px; fill: #444746; }
.tb-search + .tb { margin-left: 2px; }
.tb-label { font-size: 8.800px; color: #444746; white-space: nowrap; }
.zoom-label { width: 22px; margin-left: 5.500px; }
.style-label { width: 44px; color: #5f6368; }
.font-label { width: 35px; color: #5f6368; }
.caret-near { margin-left: 2px; }
.caret-style { margin-left: 10.500px; }
.caret-font { margin-left: 6.500px; }
.tb-sep { width: 1px; height: 14px; background: #c7c7c7; flex: none; }
.sep-a { margin: 0 9px 0 8px; }
.sep-b { margin: 0 9px 0 9.500px; }
.sep-c { margin: 0 0 0 9.500px; }
.sep-d { margin: 0 -1px 0 3px; }
.sep-e { margin: 0 1.500px 0 2px; }
.sep-f { margin: 0 2px 0 2px; }
.size-btn { width: 16px; }
.size-box { width: 20px; height: 13px; margin-left: 3px; border: 1px solid #747775; border-radius: 2px; font-size: 8.500px; line-height: 11px; text-align: center; flex: none; color: #1f1f1f; }
.tb-tight { width: 15px; }
.highlight { margin-left: 1.500px; }
.spacing { margin-left: 3px; }
.checklist { margin-left: 2px; }
.bullets { margin-left: 6px; }
.numbers { margin-left: 4px; }
.indent { margin-left: 6.750px; }
.tb-right { margin-left: auto; display: flex; align-items: center; }
.edit-icon { width: 10px; height: 10px; fill: #444746; }
.edit-label { font-size: 9px; margin-left: 6px; width: 29px; }
.edit-caret { margin-left: 22px; }
.edit-sep { margin: 0 6px 0 15px; }
.collapse { width: 10px; height: 10px; margin-right: 12px; }

/* rulers */
.ruler-bar { height: 12px; margin-top: 1px; flex: none; }
.ruler-h {
  margin-left: 390.500px;
  width: 477px;
  height: 12px;
  display: flex;
  background: repeating-linear-gradient(90deg, transparent 0 4.680px, #9aa0a6 4.680px 5.680px) 0 8px / auto 2px no-repeat;
}
.ruler-h span { width: 22.720px; height: 12px; flex: none; text-align: center; font-size: 7px; line-height: 12px; color: #5f6368; }
.ruler-mark { display: flex; justify-content: center; align-items: flex-end; padding-bottom: 1px; }
.ruler-mark i { width: 0; height: 0; border-left: 4px solid transparent; border-right: 4px solid transparent; border-top: 6px solid #3b78e7; }
.ruler-mark-r { position: relative; }
.ruler-mark-r::after { content: ""; position: absolute; left: 7.500px; bottom: 1px; border-left: 4px solid transparent; border-right: 4px solid transparent; border-bottom: 5px solid #3b78e7; }

.workspace { flex: 1; display: flex; min-height: 0; position: relative; }
.ruler-v {
  width: 9px;
  flex: none;
  padding-top: 4px;
  display: flex;
  flex-direction: column;
  background: repeating-linear-gradient(180deg, transparent 0 4.680px, #b5b9bd 4.680px 5.680px) 0 0 / 7px 100% no-repeat;
  overflow: hidden;
}
.ruler-v span { height: 22.720px; flex: none; font-size: 7px; line-height: 22.720px; color: #5f6368; transform: rotate(-90deg); text-align: center; width: 9px; background: radial-gradient(circle, #f9fbfd 55%, transparent 60%); }

/* document tabs panel */
.sidebar { width: 381px; flex: none; }
.back { width: 13px; height: 13px; margin: 11px 0 0 14px; fill: #3c4043; }
.side-head { display: flex; align-items: center; height: 14px; margin: 17px 0 0 17px; font-size: 9px; color: #444746; letter-spacing: .1px; }
.side-head span { width: 122px; white-space: nowrap; }
.side-head svg { width: 8px; height: 8px; }
.side-active { width: 148px; height: 24px; margin: 9.500px 0 0 11px; background: #d3e3fd; border-radius: 12px; display: flex; align-items: center; padding-left: 12px; color: #1f4a8f; font-size: 8.900px; font-weight: 500; }
.doc-tab-icon { width: 10px; height: 10px; }
.side-active-text { margin-left: 6px; width: 100px; white-space: nowrap; }
.kebab { width: 3px; height: 9px; margin-left: 2.500px; fill: #444746; }
.outline { list-style: none; margin: .5px 0 0; padding: 0 0 0 40px; position: relative; }
.outline::before { content: ""; position: absolute; left: 26px; top: 7px; bottom: 27px; width: 2px; background: #c9d0d6; }
.outline li { height: 21.550px; line-height: 21.550px; font-size: 8.650px; color: #5f6368; white-space: nowrap; }
.outline li.current { color: #4a6ea9; position: relative; }
.outline li.current::before { content: ""; position: absolute; left: -14px; top: 5px; width: 2px; height: 11px; background: #3f5f96; }

/* page */
.doc-area { width: 477px; display: flex; flex-direction: column; gap: 4px; overflow: hidden; }
.page { width: 477px; height: 520px; background: #fff; border: 1px solid #dadce0; border-top: 0; flex: none; overflow: hidden; padding-left: 57px; }
.page-next { height: 60px; border-top: 1px solid #dadce0; }
.page-text { margin-top: 5.360px; font-family: "Liberation Serif", serif; font-size: 8.450px; line-height: 14.860px; color: #2b2b2b; white-space: nowrap; will-change: transform; }
.page-text p { margin: 0; height: 14.860px; }
.page-text .slashes { letter-spacing: 2px; color: #555; }
.text-caret { display: inline-block; width: 1px; height: 10px; background: #111; vertical-align: -2px; }

.ibeam { position: absolute; left: 561px; top: 475px; width: 8px; height: 13px; }
.side-handle { position: absolute; right: -8px; top: 534px; width: 24px; height: 26px; border-radius: 50%; background: #fff; box-shadow: 0 0 2px #d5d5d5; padding: 8px 0 0 2px; }
.side-handle svg { width: 10px; height: 10px; }

/* taskbar */
.taskbar { height: 27px; background: #101215; border-top: 1px solid #2a2c30; display: flex; flex: none; }
.task-slot { width: 32.700px; height: 26px; display: flex; align-items: center; justify-content: center; flex: none; position: relative; }
.task-slot svg { width: 16px; height: 16px; }
.task-slot:nth-child(1) svg { width: 12px; height: 12px; }
.task-slot:nth-child(2) svg { width: 12px; height: 12px; }
.task-slot.running::after { content: ""; position: absolute; left: 3px; right: 3px; bottom: 0; height: 1px; background: #7fb6dc; }
.task-slot.active { background: #2c2d30; }
.badge-num { font: 6px Roboto, sans-serif; fill: #fff; text-anchor: middle; }
.tray { margin-left: auto; display: flex; align-items: center; height: 26px; }
.tray-icon { width: 11px; height: 11px; margin-right: 5px; }
.lang { font: 8.300px "Open Sans", sans-serif; color: #e4e4e4; margin-left: 3px; width: 14px; }
.clock { display: flex; flex-direction: column; align-items: center; margin-left: 5px; font: 8.300px/12px "Open Sans", sans-serif; color: #e4e4e4; width: 46px; }
.notif { position: relative; margin: 0 18px 0 6px; }
.notif svg { width: 12px; height: 12px; }
.notif-count { position: absolute; left: 6px; top: 5px; width: 11px; height: 11px; border-radius: 50%; background: #333; border: 1px solid #888; color: #fff; font: 7px/9px Roboto, sans-serif; text-align: center; }
```
